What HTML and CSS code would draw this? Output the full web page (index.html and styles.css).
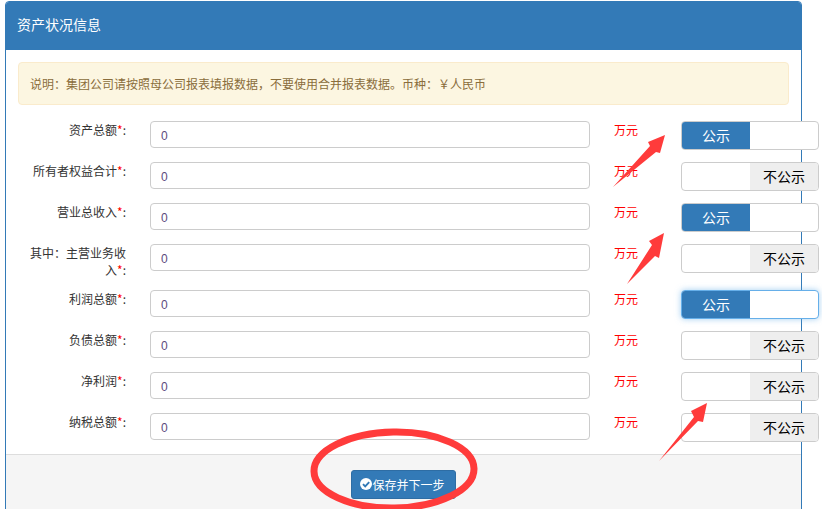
FILE: index.html
```html
<!DOCTYPE html>
<html lang="zh-CN">
<head>
<meta charset="utf-8">
<title>资产状况信息</title>
<link rel="stylesheet" href="styles.css">
</head>
<body>
<div class="panel">
  <div class="panel-heading">资产状况信息</div>
  <div class="panel-body">
    <div class="alert">说明：集团公司请按照母公司报表填报数据，不要使用合并报表数据。币种：￥人民币</div>
    <div class="form">
      <div class="row"><label class="label">资产总额<span class="req">*</span>:</label><input class="input" value="0"><span class="unit">万元</span><div class="toggle"><span class="on">公示</span><span class="blank"></span></div></div>
      <div class="row"><label class="label">所有者权益合计<span class="req">*</span>:</label><input class="input" value="0"><span class="unit">万元</span><div class="toggle"><span class="blank"></span><span class="off">不公示</span></div></div>
      <div class="row"><label class="label">营业总收入<span class="req">*</span>:</label><input class="input" value="0"><span class="unit">万元</span><div class="toggle"><span class="on">公示</span><span class="blank"></span></div></div>
      <div class="row"><label class="label">其中：主营业务收<span class="keep">入<span class="req">*</span>:</span></label><input class="input" value="0"><span class="unit">万元</span><div class="toggle"><span class="blank"></span><span class="off">不公示</span></div></div>
      <div class="row"><label class="label">利润总额<span class="req">*</span>:</label><input class="input" value="0"><span class="unit">万元</span><div class="toggle focused"><span class="on">公示</span><span class="blank"></span></div></div>
      <div class="row"><label class="label">负债总额<span class="req">*</span>:</label><input class="input" value="0"><span class="unit">万元</span><div class="toggle"><span class="blank"></span><span class="off">不公示</span></div></div>
      <div class="row"><label class="label">净利润<span class="req">*</span>:</label><input class="input" value="0"><span class="unit">万元</span><div class="toggle"><span class="blank"></span><span class="off">不公示</span></div></div>
      <div class="row"><label class="label">纳税总额<span class="req">*</span>:</label><input class="input" value="0"><span class="unit">万元</span><div class="toggle"><span class="blank"></span><span class="off">不公示</span></div></div>
    </div>
  </div>
  <div class="panel-footer">
    <button class="btn" type="button"><svg class="btn-icon" viewBox="0 0 12 12" aria-hidden="true"><circle cx="6" cy="6" r="6" fill="#fff"/><path d="M3 6.2 5.2 8.4 9.2 4.2" fill="none" stroke="#337ab7" stroke-width="1.9"/></svg>保存并下一步</button>
  </div>
</div>
<svg class="marks" viewBox="0 0 822 509" aria-hidden="true">
  <polygon points="613,187 650,146 648,142 665,135 660,153 656,152" fill="#ff3b3b"/>
  <polygon points="627,284 652,245 649,241 664,233 659,258 655,256" fill="#ff3b3b"/>
  <polygon points="659,461 694,417 691,411 707,403 703,422 698,421" fill="#ff3b3b"/>
  <ellipse cx="394" cy="470" rx="80" ry="38" transform="rotate(-1 394 470)" fill="none" stroke="#ff3b3b" stroke-width="7"/>
</svg>
</body>
</html>
```
FILE: styles.css
```css
* { box-sizing: border-box; }
html, body { height: 509px; overflow: hidden; }
body {
  margin: 0;
  padding: 1px 0 0 5px;
  position: relative;
  background: #fff;
  font-family: "Noto Sans CJK SC", "Liberation Sans", sans-serif;
  font-size: 12px;
  color: #333;
}
.panel {
  width: 797px;
  border: 1px solid #337ab7;
  border-radius: 4px;
  background: #fff;
}
.panel-heading {
  height: 48px;
  padding-left: 11px;
  background: #337ab7;
  color: #fff;
  font-size: 14px;
  line-height: 45px;
  border-radius: 3px 3px 0 0;
}
.panel-body { padding: 12px; }
.alert {
  height: 43px;
  padding: 0 11px;
  border: 1px solid #faebcc;
  border-radius: 4px;
  background: #fcf6e1;
  color: #8a6d3b;
  line-height: 41px;
}
.form {
  display: flex;
  flex-direction: column;
  gap: 12px;
  margin-top: 16px;
}
.row {
  display: flex;
  align-items: flex-start;
}
.label {
  width: 108px;
  flex: none;
  padding-left: 8px;
  text-align: right;
  line-height: 17px;
  color: #333;
}
.keep { white-space: nowrap; }
.req { color: #f00; }
.input {
  flex: none;
  width: 440px;
  height: 27px;
  margin-left: 24px;
  padding: 2px 10px 0;
  border: 1px solid #ccc;
  border-radius: 4px;
  font: 12px "Liberation Sans", sans-serif;
  color: #5c4a7c;
  outline: none;
}
.unit {
  flex: none;
  width: 67px;
  margin-left: 24px;
  line-height: 18px;
  color: #f00;
}
.toggle {
  flex: none;
  display: flex;
  width: 138px;
  height: 29px;
  border: 1px solid #ccc;
  border-radius: 4px;
  overflow: hidden;
  background: #fff;
  font-size: 14px;
  line-height: 27px;
  text-align: center;
}
.toggle.focused {
  border-color: #66afe9;
  box-shadow: 0 0 6px rgba(102, 175, 233, .6);
}
.toggle span { flex: 1 1 50%; }
.on { background: #337ab7; color: #fff; }
.off { background: #eee; color: #000; }
.panel-footer {
  height: 60px;
  padding-top: 15px;
  border-top: 1px solid #ddd;
  background: #f5f5f5;
  text-align: center;
}
.btn {
  display: inline-flex;
  align-items: center;
  justify-content: center;
  width: 105px;
  height: 29px;
  padding: 0 2px 0 0;
  border: 1px solid #2e6da4;
  border-radius: 3px;
  background: #337ab7;
  color: #fff;
  font: inherit;
}
.btn-icon { width: 12px; height: 12px; margin-top: -2px; }
.marks {
  position: absolute;
  left: 0;
  top: 0;
  width: 822px;
  height: 509px;
  pointer-events: none;
}
```
